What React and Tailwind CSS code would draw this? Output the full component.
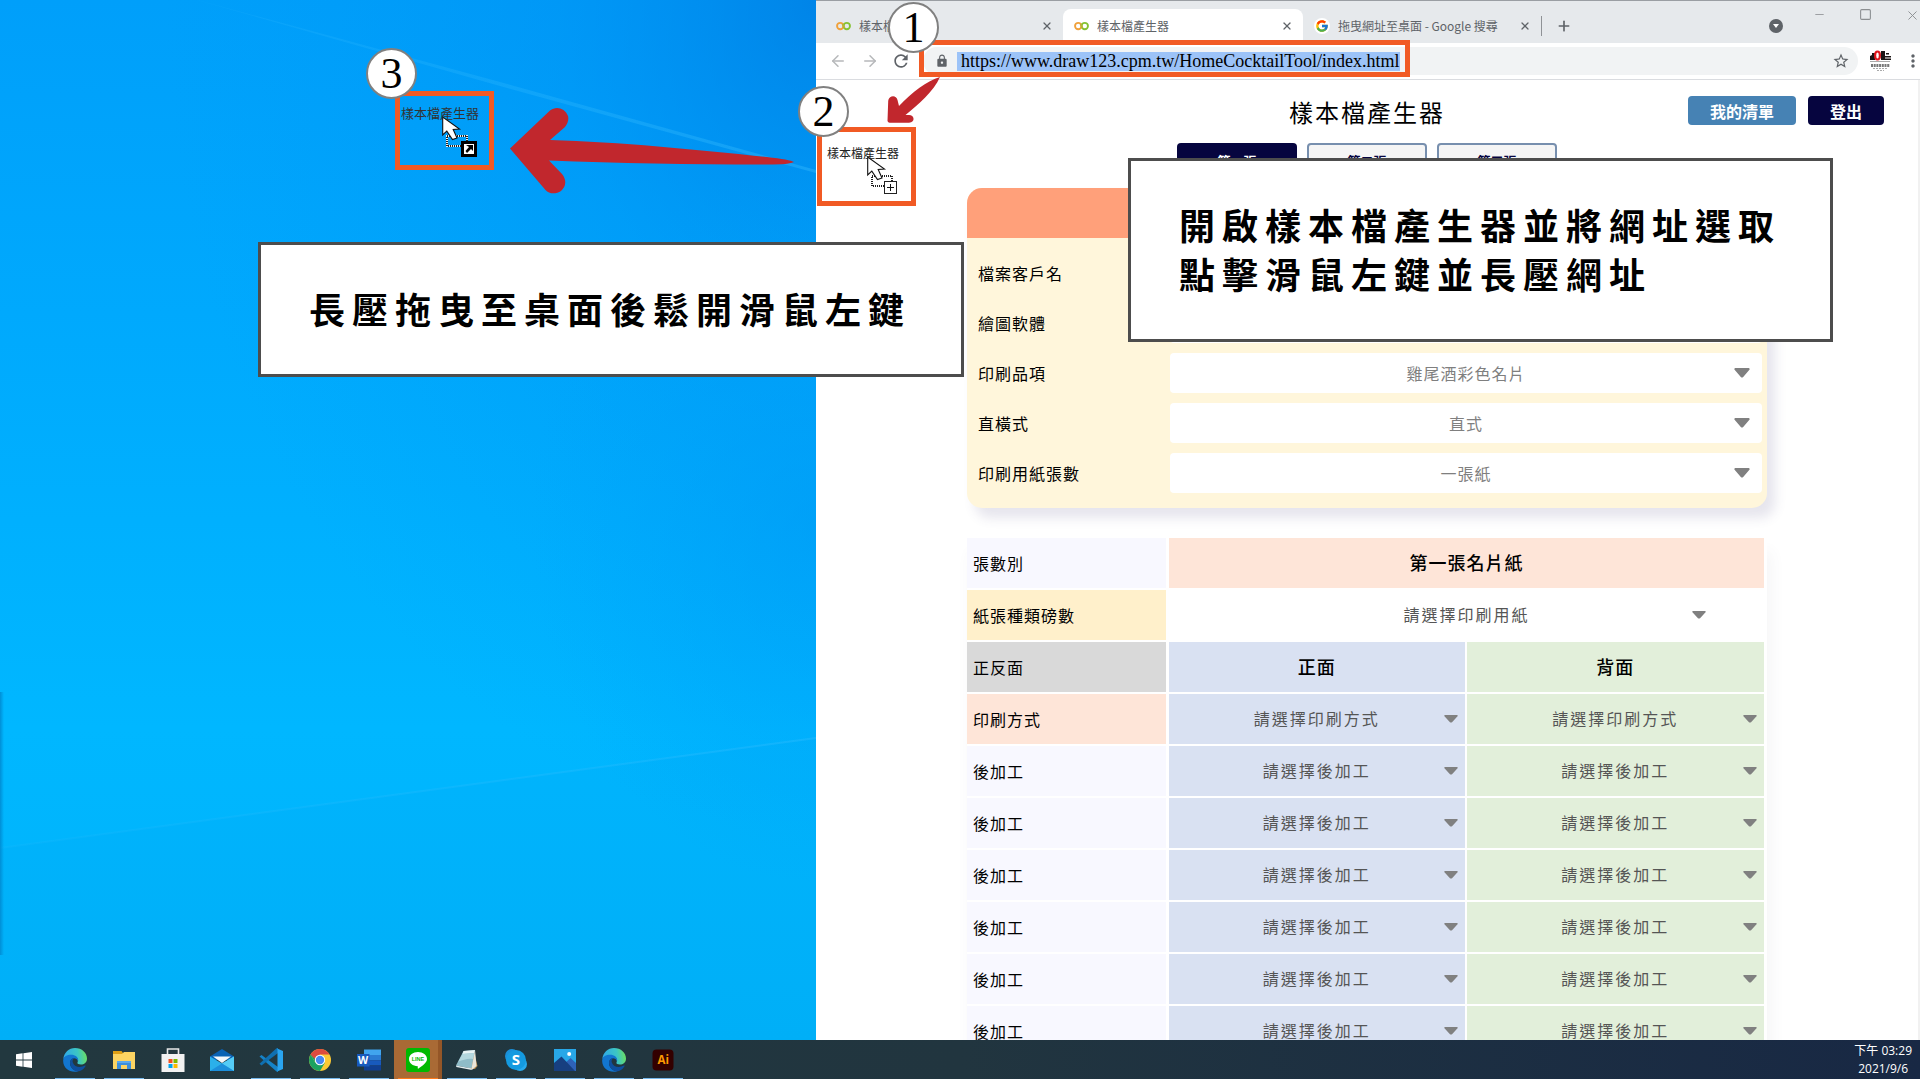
import React from "react";
import { ArrowLeft, ArrowRight, X, Plus, Minus, Square } from "lucide-react";
import { FcGoogle } from "react-icons/fc";
import { MdRefresh, MdLock, MdStarBorder, MdMoreVert } from "react-icons/md";

const NAVY_BTN = "rounded bg-[#06053f] font-bold text-white";

function Wallpaper() {
  return (
    <svg className="absolute inset-0 h-full w-full" viewBox="0 0 816 1040" preserveAspectRatio="none" aria-hidden="true">
      <defs>
        <linearGradient id="sky" x1="0" y1="0" x2="0" y2="1">
          <stop offset="0" stopColor="#009ffa" />
          <stop offset="0.3" stopColor="#00a9fd" />
          <stop offset="0.7" stopColor="#00b7ff" />
          <stop offset="1" stopColor="#00b2f9" />
        </linearGradient>
        <radialGradient id="deep" cx="1" cy="0" r="0.8">
          <stop offset="0" stopColor="#0079e0" stopOpacity="0.7" />
          <stop offset="0.4" stopColor="#0088ee" stopOpacity="0.3" />
          <stop offset="1" stopColor="#0096f6" stopOpacity="0" />
        </radialGradient>
        <radialGradient id="side" cx="1" cy="0.5" r="0.35">
          <stop offset="0" stopColor="#0098f4" stopOpacity="0.5" />
          <stop offset="1" stopColor="#00a0f8" stopOpacity="0" />
        </radialGradient>
        <linearGradient id="beam" x1="0" y1="0" x2="1" y2="0">
          <stop offset="0" stopColor="#3cc0ff" stopOpacity="0.2" />
          <stop offset="1" stopColor="#3cc0ff" stopOpacity="0.6" />
        </linearGradient>
      </defs>
      <rect width="816" height="1040" fill="url(#sky)" />
      <rect width="816" height="1040" fill="url(#deep)" />
      <rect width="816" height="1040" fill="url(#side)" />
      <path d="M0 848 L816 738 V1040 H0 Z" fill="#00a6ee" opacity="0.14" />
      <path d="M190 -2 L500 82 L816 170 L816 173 L500 86 Z" fill="url(#beam)" opacity="0.6" />
      <path d="M0 847 L816 737 V739 L0 849 Z" fill="url(#beam)" opacity="0.5" />
    </svg>
  );
}

function TabLogo() {
  return (
    <svg width="15" height="12" viewBox="0 0 16 12" fill="none" strokeWidth="2" aria-hidden="true">
      <circle cx="4.5" cy="6" r="3.4" stroke="#f0a13c" />
      <circle cx="11.5" cy="6" r="3.4" stroke="#86c232" />
      <path d="M7 3.8 L9 8.2" stroke="#b9b433" />
    </svg>
  );
}

function BrowserTab({ title, icon, active, width }) {
  return (
    <div className={`flex h-[34px] shrink-0 items-center pr-2 pl-[11px] text-xs text-[#5f6368] ${width} ${active ? "rounded-t-lg bg-white" : ""}`}>
      {icon}
      <span className="ml-2 flex-1 overflow-hidden whitespace-nowrap">{title}</span>
      <button className="flex h-4 w-4 items-center justify-center" aria-label="關閉分頁">
        <X size={12} strokeWidth={2.5} />
      </button>
    </div>
  );
}

function Caret({ className, small }) {
  return (
    <svg className={`pointer-events-none absolute top-1/2 -translate-y-1/2 ${className}`} width={small ? 14 : 16} height={small ? 8 : 10} viewBox="0 0 16 10" preserveAspectRatio="none" aria-hidden="true">
      <path d="M1.2 0 H14.8 Q16.4 0.6 15.2 2 L9.2 9 Q8 10 6.8 9 L0.8 2 Q-0.4 0.6 1.2 0 Z" fill="#808080" />
    </svg>
  );
}

function FieldSelect({ id, value }) {
  return (
    <div className="relative">
      <select id={id} className="h-10 w-full appearance-none rounded bg-white text-center text-base tracking-[1px] text-[#7f7f7f]">
        <option>{value}</option>
      </select>
      <Caret className="right-3" />
    </div>
  );
}

function CellSelect({ label, value, caret }) {
  return (
    <div className="relative">
      <select aria-label={label} className="h-12 w-full appearance-none bg-transparent pb-[3px] text-center text-base tracking-[2px] text-[#555]">
        <option>{value}</option>
      </select>
      <Caret small className={caret} />
    </div>
  );
}

const FIELDS = [
  { id: "software", label: "繪圖軟體", value: "" },
  { id: "item", label: "印刷品項", value: "雞尾酒彩色名片" },
  { id: "direction", label: "直橫式", value: "直式" },
  { id: "sheets", label: "印刷用紙張數", value: "一張紙" },
];

const FINISHES = [1, 2, 3, 4, 5, 6];

const TH = "h-[52px] border-r-3 border-b-2 border-white bg-clip-padding pl-[6px] text-left text-base font-normal tracking-[1px]";
const HEAD = "pb-[2px] text-lg font-medium tracking-[1px]";
const FRONT = "border-r-2 border-b-2 border-white bg-[#d9e1f2] bg-clip-padding";
const BACK = "border-b-2 border-white bg-[#e2efda] bg-clip-padding";

function PaperTable() {
  return (
    <div className="mt-[30px] bg-white pr-[3px] shadow-[4px_14px_14px_rgba(80,80,110,0.06)]">
      <table className="w-full table-fixed border-separate border-spacing-0">
        <colgroup>
          <col className="w-[202px]" />
          <col />
          <col />
        </colgroup>
        <tbody>
          <tr>
            <th scope="row" className={`${TH} bg-[#f8f8ff]`}>張數別</th>
            <th colSpan={2} className={`border-b-2 border-white bg-[#fee5d8] bg-clip-padding ${HEAD}`}>第一張名片紙</th>
          </tr>
          <tr>
            <th scope="row" className={`${TH} bg-[#fff0cb]`}>紙張種類磅數</th>
            <td colSpan={2} className="border-b-2 border-white">
              <CellSelect label="紙張種類磅數" value="請選擇印刷用紙" caret="right-[58px]" />
            </td>
          </tr>
          <tr>
            <th scope="row" className={`${TH} bg-[#d9d9d9]`}>正反面</th>
            <th className={`${FRONT} ${HEAD}`}>正面</th>
            <th className={`${BACK} ${HEAD}`}>背面</th>
          </tr>
          <tr>
            <th scope="row" className={`${TH} bg-[#fee5d8]`}>印刷方式</th>
            <td className={FRONT}><CellSelect label="正面印刷方式" value="請選擇印刷方式" caret="right-[7px]" /></td>
            <td className={BACK}><CellSelect label="背面印刷方式" value="請選擇印刷方式" caret="right-[7px]" /></td>
          </tr>
          {FINISHES.map((n) => (
            <tr key={n}>
              <th scope="row" className={`${TH} bg-[#f8f8ff]`}>後加工</th>
              <td className={FRONT}><CellSelect label={`正面後加工 ${n}`} value="請選擇後加工" caret="right-[7px]" /></td>
              <td className={BACK}><CellSelect label={`背面後加工 ${n}`} value="請選擇後加工" caret="right-[7px]" /></td>
            </tr>
          ))}
        </tbody>
      </table>
    </div>
  );
}

function WebPage() {
  return (
    <main className="min-h-0 flex-1 overflow-hidden border-r-2 border-[#f1f1f1] bg-white text-black">
      <header className="grid grid-cols-[1fr_auto_1fr] items-start px-[34px] pt-4">
        <span />
        <h1 className="text-2xl leading-8 tracking-[2px]">樣本檔產生器</h1>
        <div className="flex justify-end gap-3 text-base">
          <button className="h-[29px] w-[108px] rounded bg-[#4682b4] font-bold text-white">我的清單</button>
          <button className={`h-[29px] w-[76px] ${NAVY_BTN}`}>登出</button>
        </div>
      </header>
      <nav className="mt-[15px] flex justify-center gap-[10px] text-[13px]">
        <button className={`h-[35px] w-[120px] ${NAVY_BTN}`}>第一張</button>
        <button className="h-[35px] w-[120px] rounded border-2 border-[#778fae] bg-[#f5f5f5] font-bold text-[#06053f]">第二張</button>
        <button className="h-[35px] w-[120px] rounded border-2 border-[#778fae] bg-[#f5f5f5] font-bold text-[#06053f]">第三張</button>
      </nav>
      <div className="mx-auto mt-[10px] w-full max-w-[800px]">
        <form className="overflow-hidden rounded-[15px] bg-[#fff6db] shadow-[8px_10px_12px_rgba(80,70,130,0.14)]">
          <div className="h-[50px] bg-[#ffa07a]" />
          <div className="grid grid-cols-[192px_1fr] items-center gap-y-[10px] py-[15px] pr-[5px] pl-[11px]">
            <label htmlFor="client" className="text-base tracking-[1px]">檔案客戶名</label>
            <input id="client" className="h-10 rounded bg-white px-3 text-center text-base" />
            {FIELDS.map((f) => (
              <React.Fragment key={f.id}>
                <label htmlFor={f.id} className="text-base tracking-[1px]">{f.label}</label>
                <FieldSelect id={f.id} value={f.value} />
              </React.Fragment>
            ))}
          </div>
        </form>
        <PaperTable />
      </div>
    </main>
  );
}

function Avatar() {
  return (
    <svg width="22" height="22" viewBox="0 0 22 22" aria-hidden="true">
      <path d="M1 10 V6 L3 5 V3 H6 V10 Z M12 1 H16 V10 H12 Z M17 3 H20 V4.5 H17 Z M16 6 H22 V7.5 H16 Z M16 8.5 H22 V10 H16 Z" fill="#1b1515" />
      <ellipse cx="8.5" cy="5.5" rx="2.4" ry="4" fill="none" stroke="#e0161b" strokeWidth="2.2" />
      <path d="M1 11.5 H21" stroke="#aaa" />
      <path d="M2 15.5 H21" stroke="#777" strokeWidth="3" strokeDasharray="2 0.7" />
      <path d="M4 18.5 H18 M8 20.5 H15" stroke="#aaa" strokeDasharray="2 1" />
    </svg>
  );
}

function BrowserWindow() {
  return (
    <section className="flex min-w-0 flex-1 flex-col border-t border-[#9a9ea3] bg-white shadow-[0_0_14px_rgba(0,30,90,0.5)]">
      <div className="flex h-[42px] items-end bg-[#e6e9ec] pl-[9px]">
        <BrowserTab width="w-[238px]" title="樣本檔產生器" icon={<TabLogo />} />
        <BrowserTab width="w-[240px]" title="樣本檔產生器" icon={<TabLogo />} active />
        <BrowserTab width="w-[238px]" title="拖曳網址至桌面 - Google 搜尋" icon={<span className="rounded-full bg-white p-px"><FcGoogle size={14} /></span>} />
        <div className="flex h-[34px] items-center">
          <span className="h-5 w-px bg-[#8f9296]" />
          <button className="ml-[14px] text-[#5f6368]" aria-label="新分頁"><Plus size={16} strokeWidth={2.5} /></button>
        </div>
        <div className="flex h-[34px] flex-1 items-center justify-end pr-[30px]">
          <button className="flex h-[14px] w-[14px] items-center justify-center rounded-full bg-[#5f6368]" aria-label="搜尋分頁">
            <svg width="6" height="4" viewBox="0 0 6 4"><path d="M0 0 H6 L3 4 Z" fill="#fff" /></svg>
          </button>
        </div>
        <div className="flex h-full gap-[33px] overflow-hidden pt-[7px] text-[#8b8e91]">
          <button className="h-[13px]" aria-label="最小化"><Minus size={13} strokeWidth={1.5} /></button>
          <button className="h-[13px]" aria-label="最大化"><Square size={13} strokeWidth={2} /></button>
          <button className="h-[13px]" aria-label="關閉"><X size={15} strokeWidth={1.5} /></button>
        </div>
      </div>
      <div className="flex h-[37px] items-center border-b border-[#dadce0] pr-px pl-[13px] text-[#5f6368]">
        <button className="text-[#b6b8ba]" aria-label="上一頁"><ArrowLeft size={18} /></button>
        <button className="ml-[14px] text-[#b6b8ba]" aria-label="下一頁"><ArrowRight size={18} /></button>
        <button className="ml-3" aria-label="重新載入"><MdRefresh size={20} /></button>
        <div className="ml-3 flex h-7 flex-1 items-center rounded-full bg-[#f1f3f4] pr-2 pl-3">
          <MdLock size={14} />
          <input
            aria-label="網址"
            readOnly
            className="ml-2 h-[19px] w-[443px] bg-[#9cc3f8] pb-px pl-1 font-['Liberation_Serif',serif] text-lg text-black"
            value="https://www.draw123.cpm.tw/HomeCocktailTool/index.html"
          />
          <button className="ml-auto" aria-label="加入書籤"><MdStarBorder size={18} /></button>
        </div>
        <button className="ml-[11px]" aria-label="使用者"><Avatar /></button>
        <button className="ml-3 -mr-1" aria-label="選單"><MdMoreVert size={20} /></button>
      </div>
      <WebPage />
    </section>
  );
}

function EdgeIcon({ id }) {
  return (
    <svg width="24" height="24" viewBox="0 0 24 24" aria-hidden="true">
      <defs>
        <linearGradient id={id} x1="0" y1="0.3" x2="1" y2="0.2">
          <stop offset="0" stopColor="#2fa8e8" />
          <stop offset="0.6" stopColor="#3cc6c4" />
          <stop offset="1" stopColor="#6fe05a" />
        </linearGradient>
      </defs>
      <path d="M0.3 11 C1 4.5 6 0 12 0 C19 0 24 5 24 10.5 C24 14.5 21 16.5 18 16.5 C15.5 16.5 14 15.6 14.4 14.8 C16 12 14 7.8 9 7.8 C5 7.8 1.5 9 0.3 11 Z" fill={`url(#${id})`} />
      <path d="M0.2 12 C0.6 8.5 4.2 6.8 8 6.8 C13 6.8 16 10 15 13.5 C14.5 11.3 12.8 10.3 11 10.3 C8.5 10.3 7 12.5 7 15 C7 19.5 11 23 15.3 23.4 C7 25.5 -0.5 20 0.2 12 Z" fill="#1276cf" />
      <path d="M7 14.6 C7 12 9 9.8 11.3 10.2 C9.5 11.5 9.4 13 9.8 14.5 C10.8 18.5 16.5 20.5 22 17.6 C22.6 17.4 22.8 17.8 22.5 18.2 C20.5 21.4 17.8 23.2 14.8 23.5 C10.5 23.2 7 19.3 7 14.6 Z" fill="#0e4f9e" />
    </svg>
  );
}

const ICONS = {
  windows: (
    <svg width="16" height="16" viewBox="0 0 16 16"><path d="M0 2.3 L6.6 1.3 V7.5 H0 Z M7.4 1.2 L16 0 V7.5 H7.4 Z M0 8.4 H6.6 V14.7 L0 13.7 Z M7.4 8.4 H16 V16 L7.4 14.8 Z" fill="#fff" /></svg>
  ),
  folder: (
    <svg width="24" height="24" viewBox="0 0 24 24"><path d="M1 3 H9.5 L11 5 V8 H1 Z" fill="#e0a015" /><path d="M1 6 H10 L12 4 H23 V21 H1 Z" fill="#fcd462" /><path d="M5 13 H19 V21 H15 V17 H9 V21 H5 Z" fill="#3d8fdb" /><path d="M5 13 H19 V15 H5 Z" fill="#5ba9ec" /></svg>
  ),
  store: (
    <svg width="24" height="24" viewBox="0 0 24 24"><path d="M6.5 8 V1 H17.5 V8" fill="none" stroke="#e8e8e8" strokeWidth="1.6" /><path d="M0.5 6 H23.5 V24 H0.5 Z" fill="#f2f2f2" /><path d="M7.5 11 H11.5 V15 H7.5 Z" fill="#f25022" /><path d="M12.5 11 H16.5 V15 H12.5 Z" fill="#7fba00" /><path d="M7.5 16 H11.5 V20 H7.5 Z" fill="#00a4ef" /><path d="M12.5 16 H16.5 V20 H12.5 Z" fill="#ffb900" /></svg>
  ),
  mail: (
    <svg width="24" height="24" viewBox="0 0 24 24"><path d="M0 8.5 L12 1 L24 8.5 V12 H0 Z" fill="#0a62b4" /><path d="M0 8.5 L12 15.5 L24 8.5 V23 H0 Z" fill="#2bb0ea" /><path d="M12 15.5 L24 8.5 V23 Z" fill="#55ccf6" /><path d="M0 23 L12 15.5 L24 23 Z" fill="#1c8fdb" /><path d="M3 8.5 H21 L12 15 Z" fill="#f4f7fa" /></svg>
  ),
  code: (
    <svg width="24" height="24" viewBox="0 0 24 24"><path d="M0.5 8.5 L2.5 7 L19 19 V24 L17.5 23.6 Z" fill="#1583c8" /><path d="M0.5 15.8 L2.5 17.4 L19 5 V0 L17.5 0.3 Z" fill="#0f6fb0" /><path d="M17.5 0.3 L24 3 V21 L17.5 23.8 C18.5 23.5 18.5 22.5 18.5 22 V2 C18.5 1.3 18.3 0.6 17.5 0.3 Z" fill="#2aa5f0" /></svg>
  ),
  chrome: (
    <svg width="24" height="24" viewBox="0 0 24 24"><circle cx="12" cy="12" r="11" fill="#fbc934" /><path d="M2.5 6.5 A11 11 0 0 0 12 23 L17 14.5 L7.2 14.5 Z" fill="#1ba261" /><path d="M2.5 6.5 L7.4 14.8 L12 12 L12 7 Z" fill="#1ba261" /><path d="M2.5 6.5 A11 11 0 0 1 21.5 6.5 L12 6.5 L7 11 Z" fill="#dd4b3e" /><circle cx="12" cy="12" r="5.2" fill="#fff" /><circle cx="12" cy="12" r="4.2" fill="#4688f1" /></svg>
  ),
  word: (
    <svg width="24" height="24" viewBox="0 0 24 24"><path d="M7 1.5 H24 V7 H7 Z" fill="#41a5ee" /><path d="M7 7 H24 V12.2 H7 Z" fill="#2b7cd3" /><path d="M7 12.2 H24 V17.5 H7 Z" fill="#185abd" /><path d="M7 17.5 H24 V22.5 H7 Z" fill="#103f91" /><path d="M0 6 H12.5 V18.5 H0 Z" fill="#185abd" /><text x="6.2" y="16" fontSize="10.5" fontWeight="700" fill="#fff" textAnchor="middle" fontFamily="Open Sans">W</text></svg>
  ),
  line: (
    <svg width="24" height="24" viewBox="0 0 24 24"><rect width="24" height="24" rx="3" fill="#00b900" /><path d="M12 4 C17 4 21 7.2 21 11 C21 15 16 18 12.5 20.5 C11.5 21 11.8 20 11.8 18.3 C6.5 18 3 15 3 11 C3 7.2 7 4 12 4 Z" fill="#fff" /><text x="12" y="13.2" fontSize="5.5" fontWeight="700" fill="#00b900" textAnchor="middle" fontFamily="Liberation Sans">LINE</text></svg>
  ),
  notepad: (
    <svg width="24" height="24" viewBox="0 0 24 24"><path d="M19 4 L22.5 18 L20 21 L12 21 Z" fill="#b58a4d" /><path d="M8.5 3 L20 2 L16.5 20.5 L1 17.5 Z" fill="#8fbcc8" /><path d="M8.5 3 L20 2 L19.3 5 L7.5 6 Z" fill="#e9f4f5" /><path d="M1 17.5 L16.5 20.5 L16.8 22 L1.3 19 Z" fill="#e4eef0" /><path d="M7.5 6 L19.3 5 L18 11 C13 10 8 12 3.4 13.5 Z" fill="#b4d8df" /><path d="M20 2 L21.5 18 L16.8 22 L16.5 20.5 Z" fill="#e9e5da" /></svg>
  ),
  skype: (
    <svg width="24" height="24" viewBox="0 0 24 24"><circle cx="8" cy="8" r="7" fill="#1b8fd8" /><circle cx="16" cy="16" r="7" fill="#27a9ec" /><circle cx="12" cy="12" r="10" fill="#149ae0" /><text x="12" y="17.4" fontSize="15" fontWeight="700" fill="#fff" textAnchor="middle" fontFamily="Open Sans">S</text></svg>
  ),
  photos: (
    <svg width="24" height="24" viewBox="0 0 24 24"><path d="M1 1 H23 V23 H1 Z" fill="#28a7e8" /><path d="M10 17 L17.5 10 L23 15 V23 H10 Z" fill="#2e62b8" /><path d="M1 15 L8.5 8.5 L22 23 H1 Z" fill="#173f80" /><circle cx="16.2" cy="6" r="2" fill="#fff" /></svg>
  ),
  illustrator: (
    <svg width="24" height="24" viewBox="0 0 24 24"><rect x="1.5" y="1.5" width="21" height="21" rx="4" fill="#330000" /><text x="12.2" y="16" fontSize="11.5" fontWeight="700" fill="#ff9a00" textAnchor="middle" fontFamily="Open Sans">Ai</text></svg>
  ),
};

const TASKS = [
  { name: "Edge", icon: <EdgeIcon id="edgeA" />, open: true },
  { name: "檔案總管", icon: ICONS.folder, open: true },
  { name: "Store", icon: ICONS.store },
  { name: "郵件", icon: ICONS.mail },
  { name: "Visual Studio Code", icon: ICONS.code, open: true },
  { name: "Chrome", icon: ICONS.chrome, open: true },
  { name: "Word", icon: ICONS.word, open: true },
  { name: "LINE", icon: ICONS.line, alert: true },
  { name: "記事本", icon: ICONS.notepad, open: true },
  { name: "Skype", icon: ICONS.skype, open: true },
  { name: "相片", icon: ICONS.photos, open: true },
  { name: "Edge 2", icon: <EdgeIcon id="edgeB" />, open: true },
  { name: "Illustrator", icon: ICONS.illustrator, open: true },
];

function Taskbar() {
  return (
    <footer className="relative z-10 flex h-[39px] shrink-0 bg-linear-to-r from-[#22383f] via-[#21353f] to-[#182844]">
      <button className="flex w-[48px] items-center justify-center" aria-label="開始">{ICONS.windows}</button>
      <div className="flex gap-px pl-[3px]">
        {TASKS.map((t) => (
          <button key={t.name} aria-label={t.name} className={`flex w-[48px] flex-col items-center justify-between pt-2 ${t.alert ? "border-r-4 border-[#945627] bg-[#a96a35] pl-1" : ""}`}>
            {t.icon}
            <span className={`h-px ${t.alert ? "w-full bg-[#ff7a1a]" : t.open ? "w-10 bg-[#76b9ed]" : "w-10"}`} />
          </button>
        ))}
      </div>
      <div className="ml-auto pt-[2px] pr-2 text-center font-['Open_Sans','Noto_Sans_CJK_TC',sans-serif] text-xs leading-[18px] text-white">
        <div>下午 03:29</div>
        <div>2021/9/6</div>
      </div>
    </footer>
  );
}

function Step({ n, className }) {
  return (
    <div className={`absolute flex h-[51px] w-[51px] items-center justify-center rounded-full border-2 border-[#808080] bg-white font-['Liberation_Serif',serif] text-[44px] leading-none text-black ${className}`}>
      {n}
    </div>
  );
}

function DragCursor({ shortcut }) {
  return (
    <svg width="36" height="42" viewBox="0 0 36 42" aria-hidden="true">
      <rect x="5" y="20" width="20" height="10" fill="none" stroke={shortcut ? "#eee" : "#fff"} strokeWidth="2" />
      <rect x="5" y="20" width="20" height="10" fill="none" stroke="#222" strokeWidth="2" strokeDasharray="1 1" />
      <path d="M0.7 1 V19 L4.8 15.2 L10.5 23.5 L15 22 L11.2 13.5 L17.5 13 Z" fill="#fff" stroke="#111" strokeWidth="1.1" />
      {shortcut ? (
        <g>
          <rect x="19" y="25" width="16" height="16" fill="#000" />
          <rect x="22" y="28" width="10" height="10" fill="#fff" />
          <path d="M24 29 H31 V35 L29 33 L25 37 L23.5 35 L27 31 Z" fill="#000" />
        </g>
      ) : (
        <g>
          <rect x="17.5" y="25.5" width="12" height="12" fill="#fff" stroke="#222" />
          <path d="M20 31.5 H27 M23.5 28 V35" stroke="#111" />
        </g>
      )}
    </svg>
  );
}

function Annotations() {
  return (
    <div className="pointer-events-none absolute inset-0 z-20">
      <div className="absolute top-[40px] left-[919px] h-[37px] w-[491px] border-5 border-[#f15a24]" />
      <svg className="absolute top-[70px] left-[880px]" width="70" height="60" viewBox="880 70 70 60" aria-hidden="true">
        <path d="M940 77 C927 81 912 92 899 106 L897.5 100 Q896 95.5 891.5 96.5 Q888.5 97.5 888.2 101 L887.5 121 Q888 123 890 122.8 L909 122.8 Q914 122 913.5 118.5 Q913 115 909 115 L905.5 115 C918 105 934 91 940 77 Z" fill="#c1272d" />
      </svg>
      <svg className="absolute top-[100px] left-[505px]" width="295" height="100" viewBox="505 100 295 100" aria-hidden="true">
        <path d="M510 148.5 L550 110.5 C556 105.5 565 108 568 116 C569 120 567.5 124 565 127 L550 140 C620 142 700 150 767 157 Q790 159.5 794 162 Q790 164.5 767 164.5 C690 164.5 620 163.5 549 160.5 L562 174 C567 180 566 187 561 191 C556 194.5 549 194 545.5 190 Z" fill="#c1272d" />
      </svg>

      <div className="absolute top-[91px] left-[395px] h-[79px] w-[99px] border-5 border-[#f15a24] pt-[7px] pl-px text-[13px] leading-5 text-[#333]">樣本檔產生器</div>
      <div className="absolute top-[116px] left-[442px]"><DragCursor shortcut /></div>
      <div className="absolute top-[127px] left-[817px] h-[79px] w-[99px] border-5 border-[#f15a24] pt-[11px] pl-[5px] text-xs leading-5 text-[#222]">樣本檔產生器</div>
      <div className="absolute top-[156px] left-[867px]"><DragCursor /></div>

      <Step n="1" className="top-[2px] left-[888px]" />
      <Step n="2" className="top-[86px] left-[798px]" />
      <Step n="3" className="top-[48px] left-[366px]" />

      <p className="absolute top-[242px] left-[258px] border-3 border-[#4d4d4d] bg-white pt-[39px] pr-[50px] pb-[41px] pl-12 text-4xl leading-[49px] font-bold tracking-[7px] whitespace-nowrap text-black">長壓拖曳至桌面後鬆開滑鼠左鍵</p>
      <p className="absolute top-[158px] left-[1128px] border-3 border-[#4d4d4d] bg-white pt-[39px] pr-[49px] pb-[41px] pl-12 text-4xl leading-[49px] font-bold tracking-[7px] whitespace-nowrap text-black">
        開啟樣本檔產生器並將網址選取
        <br />
        點擊滑鼠左鍵並長壓網址
      </p>
    </div>
  );
}

export default function App() {
  return (
    <div className="relative flex h-screen w-full flex-col overflow-hidden font-['Noto_Sans_CJK_TC',sans-serif]">
      <div className="flex min-h-0 flex-1">
        <div className="relative w-[42.5%] shrink-0">
          <Wallpaper />
          <div className="absolute bottom-[85px] left-0 h-[263px] w-1 bg-linear-to-r from-[#008fd6] to-transparent" />
        </div>
        <BrowserWindow />
      </div>
      <Taskbar />
      <Annotations />
    </div>
  );
}
